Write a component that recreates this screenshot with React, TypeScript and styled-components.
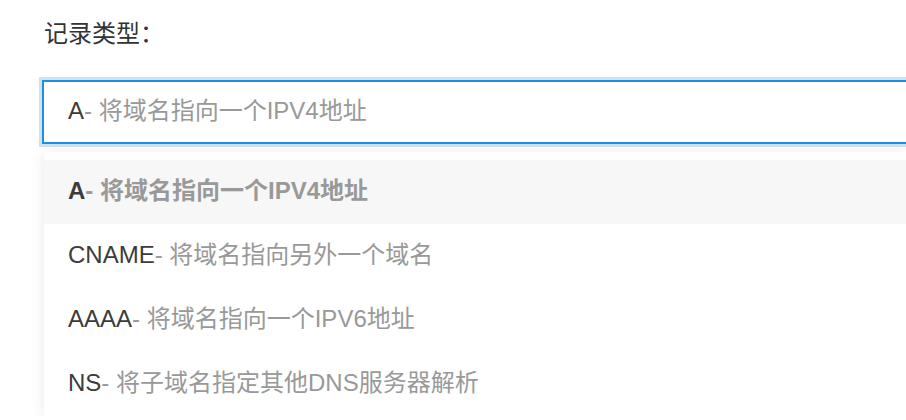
import React from "react";
import styled, { createGlobalStyle } from "styled-components";

const GlobalStyle = createGlobalStyle`
    html, body {
        margin: 0;
        padding: 0;
        background: #ffffff;
        overflow: hidden;
    }
    body {
        font-family: "Liberation Sans", "Noto Sans CJK SC", sans-serif;
    }
`;

const Page = styled.div`
    padding: 20px 0 0 42px;
`;

const Label = styled.div`
    font-size: 24px;
    line-height: 28px;
    color: #333333;
    padding-left: 2px;
    margin-bottom: 32px;
`;

const Field = styled.div`
    position: relative;
`;

const Input = styled.div`
    box-sizing: border-box;
    height: 64px;
    border: 2px solid #1f8ce6;
    border-right: none;
    box-shadow: 0 0 0 3px #cfe2f4;
    display: flex;
    align-items: center;
    padding: 0 0 3px 24px;
    font-size: 24px;
    background: #ffffff;
`;

const Menu = styled.ul`
    list-style: none;
    margin: 8px 0 0 2px;
    padding: 8px 0 0;
    background: #ffffff;
    box-shadow: 0 2px 14px rgba(0, 0, 0, 0.09);
`;

const Option = styled.li<{ $active?: boolean }>`
    box-sizing: border-box;
    height: 64px;
    display: flex;
    align-items: center;
    padding: 0 0 3px 24px;
    font-size: 24px;
    font-weight: ${(p) => (p.$active ? 600 : 400)};
    background: ${(p) => (p.$active ? "#f7f7f7" : "#ffffff")};
`;

const Text = styled.span`
    white-space: pre;
    line-height: 32px;
`;

const Code = styled.span`
    color: #3c3c3c;
`;

const Desc = styled.span`
    color: #999999;
`;

const options = [
    { code: "A", desc: "将域名指向一个IPV4地址" },
    { code: "CNAME", desc: "将域名指向另外一个域名" },
    { code: "AAAA", desc: "将域名指向一个IPV6地址" },
    { code: "NS", desc: "将子域名指定其他DNS服务器解析" },
];

type Opt = (typeof options)[number];

const OptionText = ({ o }: { o: Opt }) => (
    <Text>
        <Code>{o.code}</Code>
        <Desc>- {o.desc}</Desc>
    </Text>
);

export default function App() {
    const selected = options[0];
    return (
        <>
            <GlobalStyle />
            <Page>
                <Label>记录类型：</Label>
                <Field>
                    <Input>
                        <OptionText o={selected} />
                    </Input>
                    <Menu>
                        {options.map((o) => (
                            <Option key={o.code} $active={o.code === selected.code}>
                                <OptionText o={o} />
                            </Option>
                        ))}
                    </Menu>
                </Field>
            </Page>
        </>
    );
}
